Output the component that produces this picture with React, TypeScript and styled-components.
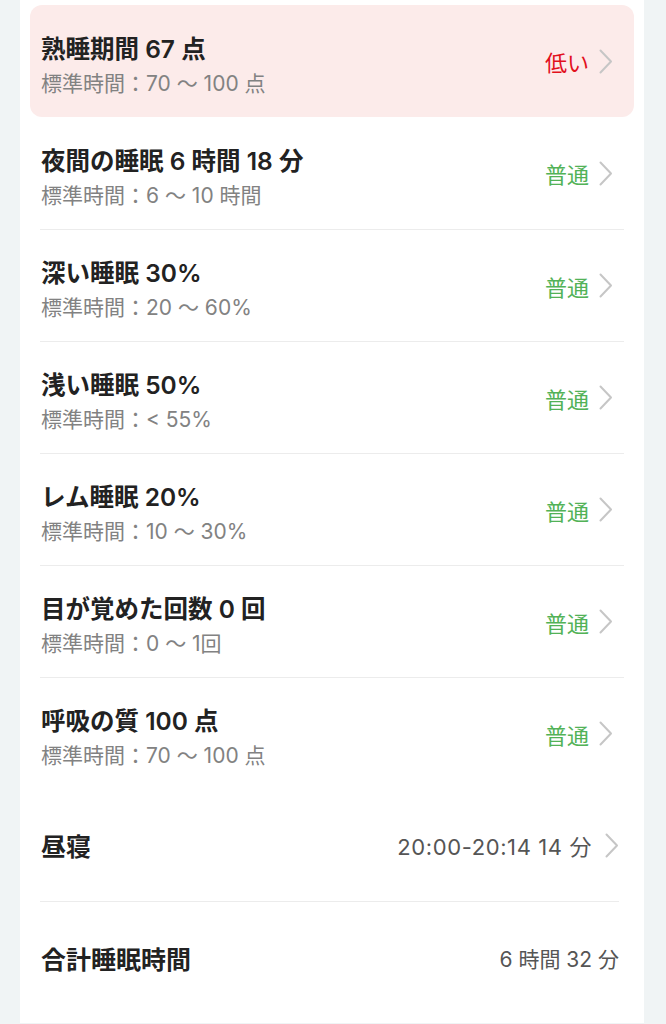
import React from "react";
import styled, { createGlobalStyle } from "styled-components";

const GlobalStyle = createGlobalStyle`
  html, body {
    margin: 0;
    padding: 0;
    background: #f0f4f5;
  }
  body {
    font-family: "Inter", "Noto Sans CJK JP", sans-serif;
    -webkit-font-smoothing: antialiased;
  }
`;

const Card = styled.div`
  width: 624px;
  margin-left: 20px;
  background: #fff;
  padding: 5px 10px 9px;
  box-sizing: border-box;
`;

const Row = styled.div<{ $alert?: boolean; $h: number }>`
  display: flex;
  align-items: center;
  height: ${(p) => p.$h}px;
  padding: 0 21px 0 11px;
  box-sizing: border-box;
  border-radius: 12px;
  background: ${(p) => (p.$alert ? "#fcebea" : "transparent")};
`;

const Texts = styled.div`
  flex: 1;
  display: flex;
  flex-direction: column;
  margin-top: 8px;
`;

const Title = styled.div`
  font-size: 24.5px;
  line-height: 34px;
  font-weight: 600;
  color: #222;
  white-space: nowrap;
`;

const Sub = styled.div`
  font-size: 21px;
  line-height: 30px;
  margin-top: 3px;
  color: #828282;
  white-space: nowrap;
`;

const Status = styled.span<{ $tone: "low" | "ok" }>`
  font-size: 22px;
  color: ${(p) => (p.$tone === "low" ? "#e2101c" : "#52b257")};
  margin-right: 10px;
`;

const Divider = styled.div<{ $right?: number }>`
  height: 1px;
  background: #ececec;
  margin: 0 ${(p) => p.$right ?? 10}px 0 10px;
`;

const PlainRow = styled.div`
  display: flex;
  align-items: center;
  height: 112px;
  padding: 0 15px 0 11px;
  box-sizing: border-box;
`;

const Label = styled.div`
  flex: 1;
  font-size: 25px;
  font-weight: 600;
  color: #222;
`;

const Value = styled.span<{ $gap?: boolean; $wide?: boolean }>`
  font-size: ${(p) => (p.$wide ? 22 : 21)}px;
  letter-spacing: ${(p) => (p.$wide ? 0.6 : 0)}px;
  color: #555;
  margin-right: ${(p) => (p.$gap ? 13 : 0)}px;
`;

const Chevron = () => (
  <svg width="14" height="25" viewBox="0 0 14 25">
    <polyline
      points="1.5,1.5 12,12.5 1.5,23.5"
      fill="none"
      stroke="#c6c6c6"
      strokeWidth="2"
      strokeLinecap="round"
      strokeLinejoin="round"
    />
  </svg>
);

type Item = {
  title: string;
  range: string;
  tone: "low" | "ok";
};

const items: Item[] = [
  { title: "熟睡期間 67 点", range: "標準時間：70 〜 100 点", tone: "low" },
  { title: "夜間の睡眠 6 時間 18 分", range: "標準時間：6 〜 10 時間", tone: "ok" },
  { title: "深い睡眠 30%", range: "標準時間：20 〜 60%", tone: "ok" },
  { title: "浅い睡眠 50%", range: "標準時間：< 55%", tone: "ok" },
  { title: "レム睡眠 20%", range: "標準時間：10 〜 30%", tone: "ok" },
  { title: "目が覚めた回数 0 回", range: "標準時間：0 〜 1回", tone: "ok" },
  { title: "呼吸の質 100 点", range: "標準時間：70 〜 100 点", tone: "ok" },
];

const App = () => {
  return (
    <>
      <GlobalStyle />
      <Card>
        {items.map((it, i) => (
          <React.Fragment key={it.title}>
            {i > 1 ? <Divider /> : null}
            <Row $alert={it.tone === "low"} $h={i > 1 ? 111 : 112}>
              <Texts>
                <Title>{it.title}</Title>
                <Sub>{it.range}</Sub>
              </Texts>
              <Status $tone={it.tone}>{it.tone === "low" ? "低い" : "普通"}</Status>
              <Chevron />
            </Row>
          </React.Fragment>
        ))}
        <PlainRow>
          <Label>昼寝</Label>
          <Value $gap $wide>20:00-20:14 14 分</Value>
          <Chevron />
        </PlainRow>
        <Divider $right={15} />
        <PlainRow>
          <Label>合計睡眠時間</Label>
          <Value>6 時間 32 分</Value>
        </PlainRow>
      </Card>
    </>
  );
};

export default App;
